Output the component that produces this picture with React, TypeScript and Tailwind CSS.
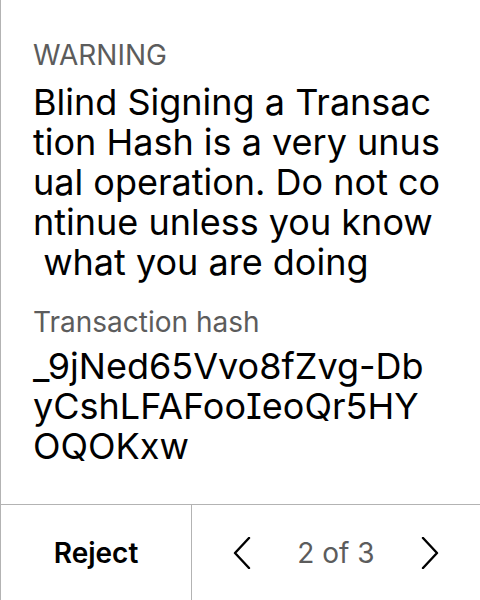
const warningLines = [
  "Blind Signing a Transac",
  "tion Hash is a very unus",
  "ual operation. Do not co",
  "ntinue unless you know",
  " what you are doing",
];

const hashLines = ["_9jNed65Vvo8fZvg-Db", "yCshLFAFooIeoQr5HY", "OQOKxw"];

const Chevron = ({ dir }: { dir: "left" | "right" }) => (
  <svg width="18" height="32" viewBox="0 0 18 32" fill="none">
    <polyline
      points={dir === "left" ? "16,1 2,16 16,31" : "2,1 16,16 2,31"}
      stroke="#000"
      strokeWidth="2.4"
      strokeLinecap="round"
      strokeLinejoin="round"
    />
  </svg>
);

const App = () => {
  return (
    <div
      className="flex h-[600px] w-[480px] flex-col border-l border-[#b3b3b3] bg-white text-black"
      style={{ fontFamily: "Inter, 'Liberation Sans', sans-serif" }}
    >
      <div className="flex-1 px-[32px] pt-[37px]">
        <p className="text-[28px] leading-[36px] text-[#5c5c5c]">WARNING</p>
        <div className="mt-[9px] text-[36px] leading-[40px]">
          {warningLines.map((line) => (
            <p key={line} className="whitespace-pre">
              {line}
            </p>
          ))}
        </div>

        <p className="mt-[22px] text-[28px] leading-[36px] text-[#5c5c5c]">
          Transaction hash
        </p>
        <div className="mt-[6px] text-[36px] leading-[40px] [font-feature-settings:'cv08']">
          {hashLines.map((line) => (
            <p key={line}>{line}</p>
          ))}
        </div>
      </div>

      <div className="flex h-[96px] border-t border-[#b3b3b3]">
        <button className="flex w-[191px] items-center justify-center border-r border-[#b3b3b3] text-[28px] font-semibold">
          Reject
        </button>
        <div className="flex flex-1 items-center justify-center gap-[46px]">
          <Chevron dir="left" />
          <span className="text-[28px] text-[#5c5c5c]">2 of 3</span>
          <Chevron dir="right" />
        </div>
      </div>
    </div>
  );
};

export default App;
